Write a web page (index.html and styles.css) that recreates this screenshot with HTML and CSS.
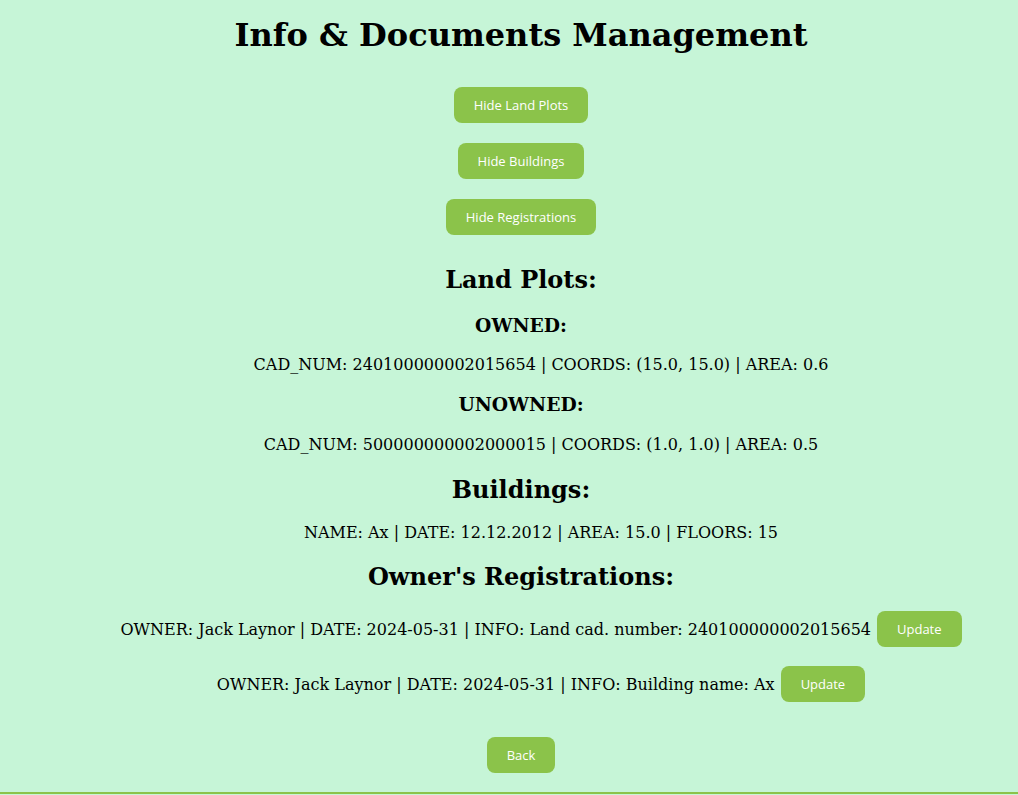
FILE: index.html
```html
<!DOCTYPE html>
<html lang="en">
<head>
<meta charset="utf-8">
<title>Info &amp; Documents Management</title>
<link rel="stylesheet" href="styles.css">
</head>
<body>
<div class="page">
  <h1 class="title">Info &amp; Documents Management</h1>
  <div class="toggles">
    <button class="btn">Hide Land Plots</button>
    <button class="btn">Hide Buildings</button>
    <button class="btn">Hide Registrations</button>
  </div>

  <h2 class="section first">Land Plots:</h2>
  <h3 class="sub">OWNED:</h3>
  <ul class="list">
    <li class="item">CAD_NUM: 240100000002015654 | COORDS: (15.0, 15.0) | AREA: 0.6</li>
  </ul>
  <h3 class="sub">UNOWNED:</h3>
  <ul class="list unowned">
    <li class="item">CAD_NUM: 500000000002000015 | COORDS: (1.0, 1.0) | AREA: 0.5</li>
  </ul>

  <h2 class="section">Buildings:</h2>
  <ul class="list">
    <li class="item">NAME: Ax | DATE: 12.12.2012 | AREA: 15.0 | FLOORS: 15</li>
  </ul>

  <h2 class="section">Owner's Registrations:</h2>
  <ul class="list regs">
    <li class="reg"><span>OWNER: Jack Laynor | DATE: 2024-05-31 | INFO: Land cad. number: 240100000002015654</span><button class="btn">Update</button></li>
    <li class="reg"><span>OWNER: Jack Laynor | DATE: 2024-05-31 | INFO: Building name: Ax</span><button class="btn">Update</button></li>
  </ul>

  <div class="back-wrap">
    <button class="btn">Back</button>
  </div>
</div>
<footer class="footer"></footer>
</body>
</html>
```

FILE: styles.css
```css
html, body {
  margin: 0;
  padding: 0;
}
body {
  background: #c6f5d7;
  color: #000;
  font-family: "DejaVu Serif", serif;
  font-size: 16px;
}
.page {
  padding: 17px 0 0 24px;
  text-align: center;
}
.title {
  font-size: 32px;
  font-weight: bold;
  margin: 0;
  line-height: 37px;
}
.toggles {
  display: flex;
  flex-direction: column;
  align-items: center;
  gap: 20px;
  margin-top: 33px;
}
.btn {
  font-family: "Open Sans", "Noto Sans", sans-serif;
  font-size: 13px;
  color: #fff;
  background: #8bc34a;
  border: none;
  border-radius: 8px;
  height: 36px;
  padding: 0 20px;
  cursor: pointer;
}
.section {
  font-size: 24px;
  font-weight: bold;
  line-height: 28px;
  margin: 30px 0 20px;
}
.section.first {
  margin-top: 31px;
}
.sub {
  font-size: 18.72px;
  font-weight: bold;
  line-height: 22px;
  margin: 0;
}
.list {
  list-style: none;
  margin: 18.5px 0;
  padding: 0 0 0 40px;
}
.sub + .list {
  margin-top: 20px;
}
.sub + .list.unowned {
  margin-top: 21px;
}
.section + .sub {
  margin-top: 0;
}
.section + .list {
  margin-top: 1px;
}
.list + .section {
  margin-top: 21px;
}
.item {
  line-height: 18.6px;
}
.regs {
  margin: 21px 0 0;
  display: flex;
  flex-direction: column;
  gap: 19px;
}
.reg {
  display: flex;
  justify-content: center;
  align-items: center;
  gap: 6px;
}
.back-wrap {
  margin-top: 35px;
  padding-bottom: 19px;
}
.footer {
  border-top: 2px solid #8bc34a;
}
```
